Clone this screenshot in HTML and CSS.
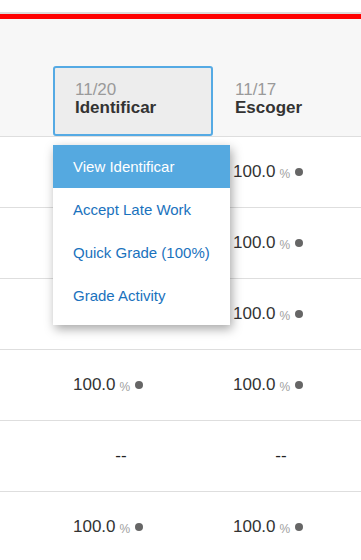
FILE: index.html
```html
<!DOCTYPE html>
<html lang="en">
<head>
  <meta charset="UTF-8">
  <meta name="viewport" content="width=device-width, initial-scale=1.0">
  <title>Gradebook</title>
  <link rel="stylesheet" href="styles.css">
</head>
<body>
  <div class="page">
    <div class="top-bar"></div>

    <div class="gradebook">
      <div class="grade-row header-row">
        <div class="name-col"></div>
        <div class="col">
          <div class="head-cell active">
            <span class="head-date">11/20</span>
            <span class="head-title">Identificar</span>
          </div>
        </div>
        <div class="col">
          <div class="head-cell">
            <span class="head-date">11/17</span>
            <span class="head-title">Escoger</span>
          </div>
        </div>
      </div>

      <div class="grade-row">
        <div class="name-col"></div>
        <div class="col cell"><span class="score">100.0</span><span class="pct">%</span><span class="dot"></span></div>
        <div class="col cell"><span class="score">100.0</span><span class="pct">%</span><span class="dot"></span></div>
      </div>
      <div class="grade-row">
        <div class="name-col"></div>
        <div class="col cell"><span class="score">100.0</span><span class="pct">%</span><span class="dot"></span></div>
        <div class="col cell"><span class="score">100.0</span><span class="pct">%</span><span class="dot"></span></div>
      </div>
      <div class="grade-row">
        <div class="name-col"></div>
        <div class="col cell"><span class="score">100.0</span><span class="pct">%</span><span class="dot"></span></div>
        <div class="col cell"><span class="score">100.0</span><span class="pct">%</span><span class="dot"></span></div>
      </div>
      <div class="grade-row">
        <div class="name-col"></div>
        <div class="col cell"><span class="score">100.0</span><span class="pct">%</span><span class="dot"></span></div>
        <div class="col cell"><span class="score">100.0</span><span class="pct">%</span><span class="dot"></span></div>
      </div>
      <div class="grade-row">
        <div class="name-col"></div>
        <div class="col cell"><span class="empty">--</span></div>
        <div class="col cell"><span class="empty">--</span></div>
      </div>
      <div class="grade-row">
        <div class="name-col"></div>
        <div class="col cell"><span class="score">100.0</span><span class="pct">%</span><span class="dot"></span></div>
        <div class="col cell"><span class="score">100.0</span><span class="pct">%</span><span class="dot"></span></div>
      </div>
    </div>

    <ul class="menu">
      <li class="menu-item selected">View Identificar</li>
      <li class="menu-item">Accept Late Work</li>
      <li class="menu-item">Quick Grade (100%)</li>
      <li class="menu-item">Grade Activity</li>
    </ul>
  </div>
</body>
</html>
```

FILE: styles.css
```css
* {
  box-sizing: border-box;
  margin: 0;
  padding: 0;
}

body {
  background-color: white;
  font-family: "Liberation Sans", Arial, sans-serif;
  color: #333;
  overflow: hidden;
}

.page {
  position: relative;
  width: 361px;
  height: 560px;
  overflow: hidden;
  padding-top: 12px;
}

.top-bar {
  height: 7px;
  border-top: 2px solid #dcdcdc;
  background-color: #ff0000;
}

.grade-row {
  display: grid;
  grid-template-columns: 53px 160px 160px;
  height: 71px;
  border-bottom: 1px solid #dedede;
}

.header-row {
  height: 118px;
  background-color: #f7f7f7;
  align-items: end;
}

.head-cell {
  display: flex;
  flex-direction: column;
  height: 70px;
  padding: 13px 20px 0;
  border: 2px solid transparent;
  border-radius: 3px;
  font-size: 17px;
  line-height: 18px;
}

.head-cell.active {
  border-color: #55aae4;
  background-color: #ededed;
}

.head-date {
  color: #9a9a9a;
}

.head-title {
  font-weight: bold;
  color: #333;
}

.cell {
  display: flex;
  align-items: center;
  padding-left: 20px;
}

.score {
  font-size: 17px;
  color: #333;
}

.pct {
  font-size: 12px;
  color: #a0a0a0;
  margin-left: 4px;
  margin-top: 3px;
}

.dot {
  width: 8px;
  height: 8px;
  border-radius: 50%;
  background-color: #666;
  margin-left: 5px;
}

.empty {
  width: 96px;
  text-align: center;
  font-size: 17px;
  color: #222;
}

.menu {
  position: absolute;
  left: 53px;
  top: 145px;
  width: 177px;
  padding-bottom: 8px;
  list-style: none;
  background-color: white;
  box-shadow: 2px 4px 10px rgba(0, 0, 0, 0.35);
}

.menu-item {
  height: 43px;
  line-height: 43px;
  padding-left: 20px;
  font-size: 15px;
  color: #1a72bd;
}

.menu-item.selected {
  background-color: #55a9e0;
  color: white;
}
```
